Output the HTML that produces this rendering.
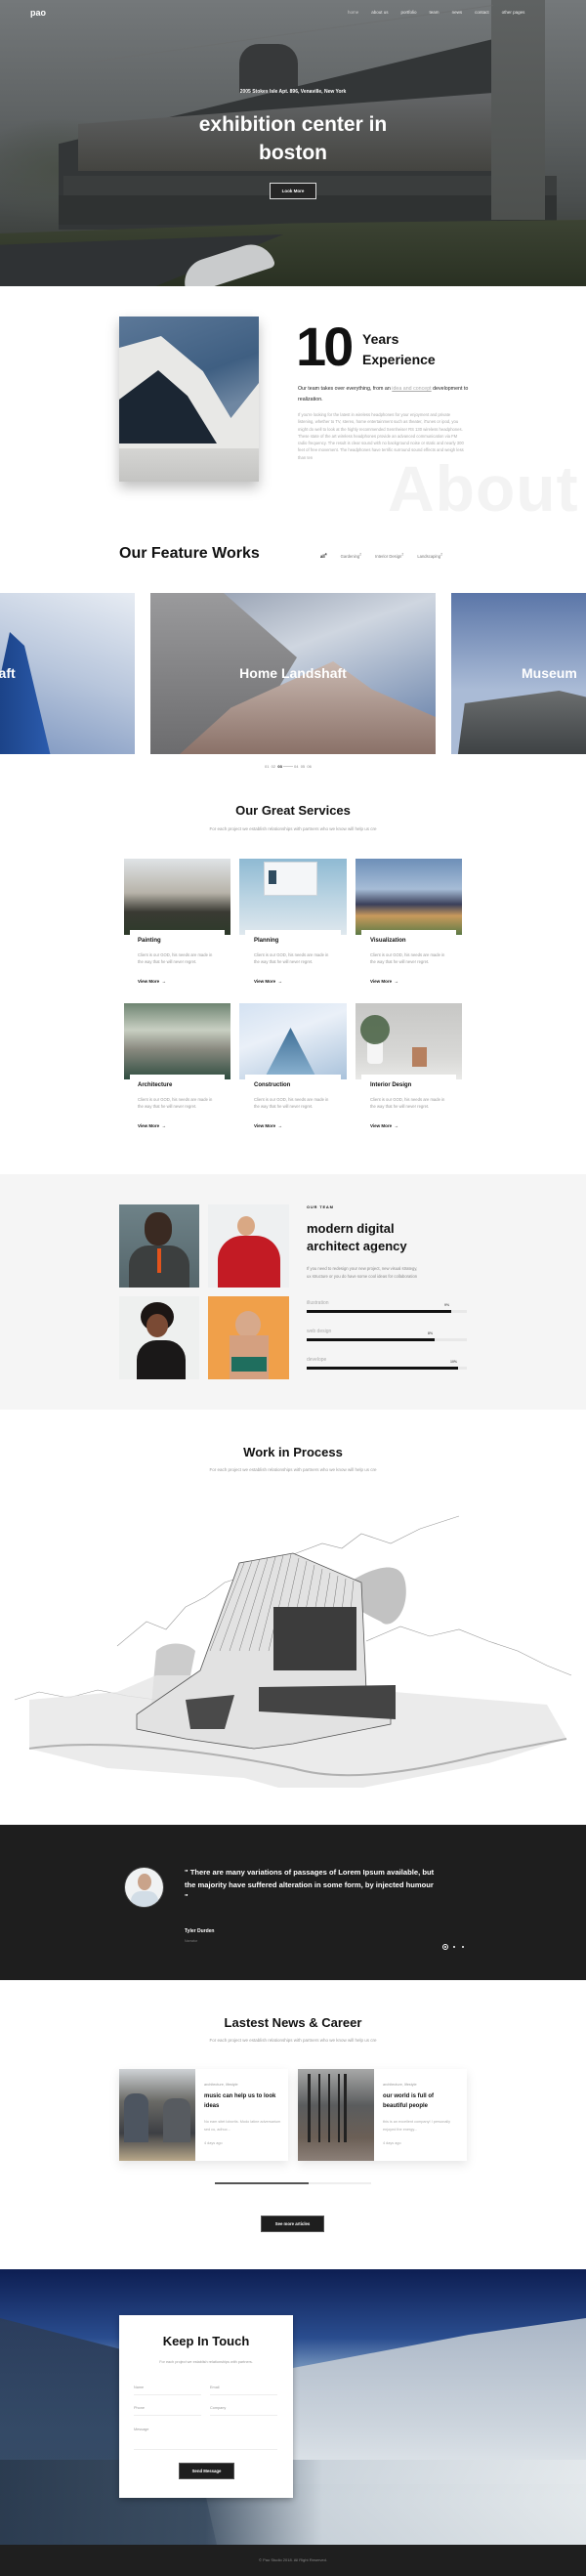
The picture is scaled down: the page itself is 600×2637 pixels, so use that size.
<!DOCTYPE html>
<html><head><meta charset="utf-8"><style>
*{margin:0;padding:0;box-sizing:border-box}
body{width:600px;height:2637px;position:relative;background:#fff;font-family:"Liberation Sans",Arial,sans-serif;color:#111;overflow:hidden}
.a{position:absolute}
.c{text-align:center}
.b{font-weight:bold}
.sm{font-size:4.5px;color:#999;line-height:8px}
.ttl{font-size:16px;font-weight:bold;color:#111;left:0;width:600px;text-align:center}
.sub{font-size:4.5px;color:#999;left:0;width:600px;text-align:center}
.card h4{font-size:6px;font-weight:bold;position:absolute}
</style></head><body>

<!-- HERO -->
<div class="a" style="left:0;top:0;width:600px;height:293px;background:linear-gradient(180deg,#74787a 0%,#5f6364 40%,#4a4e4e 70%,#2d3129 100%);overflow:hidden">
  <div class="a" style="left:0;top:120px;width:150px;height:110px;background:radial-gradient(ellipse at 40% 50%,#4a5048,transparent 70%)"></div>
  <div class="a" style="left:245px;top:45px;width:60px;height:50px;background:#37393a;border-radius:20px 20px 0 0"></div>
  <div class="a" style="left:60px;top:40px;width:445px;height:195px;background:#333637;clip-path:polygon(0 55%,100% 0,100% 100%,0 100%)"></div>
  <div class="a" style="left:80px;top:95px;width:425px;height:80px;background:linear-gradient(180deg,#646668,#444440);clip-path:polygon(0 40%,100% 0,100% 100%,0 100%)"></div>
  <div class="a" style="left:65px;top:180px;width:505px;height:22px;background:#3a3d3d"></div>
  <div class="a" style="left:60px;top:200px;width:510px;height:30px;background:#2f3232"></div>
  <div class="a" style="left:503px;top:0;width:55px;height:225px;background:linear-gradient(180deg,#5f6262,#4d504e)"></div>
  <div class="a" style="left:90px;top:5px;width:415px;height:60px;border-top:1px solid #6a6c6d;transform:skewY(-8deg);transform-origin:right top;opacity:.6"></div>
  <div class="a" style="left:0;top:225px;width:600px;height:70px;background:linear-gradient(180deg,#3c4333,#293022);clip-path:polygon(0 20%,50% 5%,100% 0,100% 100%,0 100%)"></div>
  <div class="a" style="left:0;top:240px;width:290px;height:53px;background:#2f3234;clip-path:polygon(0 20%,100% 0,55% 100%,0 100%)"></div>
  <div class="a" style="left:185px;top:258px;width:95px;height:30px;background:#c9cbcc;border-radius:40px 40px 8px 8px;transform:rotate(-18deg)"></div>
  <div class="a b" style="left:31px;top:8px;font-size:9px;color:#fff">pao</div>
  <div class="a" style="left:356px;top:10px;font-size:4.5px;color:#eee">
    <span style="margin-right:13px;color:#ccc">home</span><span style="margin-right:13px">about us</span><span style="margin-right:13px">portfolio</span><span style="margin-right:13px">team</span><span style="margin-right:13px">news</span><span style="margin-right:13px">contact</span><span>other pages</span>
  </div>
  <div class="a c b" style="left:0;width:600px;top:91px;font-size:5px;color:#fff">2005 Stokes Isle Apt. 896, Venaville, New York</div>
  <div class="a c b" style="left:0;width:600px;top:113px;font-size:21px;line-height:29px;color:#fff">exhibition center in<br>boston</div>
  <div class="a c b" style="left:276px;top:187px;width:48px;height:17px;border:1px solid #ddd;background:#262626;color:#fff;font-size:4.5px;line-height:15px">Look More</div>
</div>

<!-- ABOUT -->
<div class="a" style="left:122px;top:324px;width:143px;height:169px;box-shadow:0 6px 12px rgba(0,0,0,.25);background:linear-gradient(160deg,#5c7898 0%,#3f5f82 40%,#6f87a2 60%)">
  <div class="a" style="left:0;top:20px;width:143px;height:120px;background:#e8e8e6;clip-path:polygon(0 10%,30% 0,60% 30%,80% 70%,100% 40%,100% 100%,0 100%)"></div>
  <div class="a" style="left:0;top:55px;width:100px;height:75px;background:#1b2633;clip-path:polygon(0 40%,40% 0,70% 35%,100% 100%,0 100%)"></div>
  <div class="a" style="left:0;top:135px;width:143px;height:34px;background:linear-gradient(180deg,#d5d5d3,#c4c4c2)"></div>
</div>
<div class="a b" style="left:303px;top:322px;font-size:56px;letter-spacing:-3px;color:#111">10</div>
<div class="a b" style="left:371px;top:337px;font-size:14px;line-height:21px">Years<br>Experience</div>
<div class="a" style="left:305px;top:393px;font-size:5.3px;line-height:11px;color:#222;width:180px">Our team takes over everything, from an <span style="color:#aaa;text-decoration:underline">idea and concept</span> development to realization.</div>
<div class="a" style="left:305px;top:421px;font-size:4.2px;line-height:7.3px;color:#aaa;width:172px">If you're looking for the latest in wireless headphones for your enjoyment and private listening, whether to TV, stereo, home entertainment such as theater, iTunes or ipod, you might do well to look at the highly recommended Sennheiser RS 130 wireless headphones. These state of the art wireless headphones provide an advanced communication via FM radio frequency. The result is clear sound with no background noise or static and nearly 300 feet of free movement. The headphones have terrific surround sound effects and weigh less than ten</div>
<div class="a b" style="left:397px;top:462px;font-size:66px;color:#f3f3f3;letter-spacing:1px">About</div>

<!-- FEATURE WORKS -->
<div class="a b" style="left:122px;top:558px;font-size:16px">Our Feature Works</div>
<div class="a" style="left:328px;top:566px;font-size:4.2px;color:#777">
  <span style="color:#111;font-weight:bold;margin-right:14px">all<sup>4</sup></span><span style="margin-right:14px">Gardening<sup>2</sup></span><span style="margin-right:14px">Interior Design<sup>2</sup></span><span>Landscaping<sup>2</sup></span>
</div>
<div class="a" style="left:0;top:607px;width:138px;height:165px;background:linear-gradient(200deg,#e7ecf3 0%,#b8c6dc 50%,#7c95bf 100%);overflow:hidden">
  <div class="a" style="left:-20px;top:40px;width:75px;height:140px;background:linear-gradient(90deg,#163a7a,#2c5db0);clip-path:polygon(0 100%,40% 0,60% 10%,100% 100%)"></div>
  <div class="a b" style="left:-10px;top:74px;font-size:14px;color:#fff">haft</div>
</div>
<div class="a" style="left:154px;top:607px;width:292px;height:165px;background:linear-gradient(160deg,#8a95a8 0%,#cfd6e0 40%,#5c78a4 100%);overflow:hidden">
  <div class="a" style="left:0;top:0;width:150px;height:165px;background:linear-gradient(180deg,#9a9a9c,#6c6c6e);clip-path:polygon(0 0,50% 0,100% 40%,60% 100%,0 100%)"></div>
  <div class="a" style="left:30px;top:70px;width:262px;height:95px;background:linear-gradient(180deg,#c9b8b0,#8a7168);clip-path:polygon(20% 50%,60% 0,75% 30%,100% 60%,100% 100%,0 100%)"></div>
  <div class="a b c" style="left:0;width:292px;top:74px;font-size:14px;color:#fff">Home Landshaft</div>
</div>
<div class="a" style="left:462px;top:607px;width:138px;height:165px;background:linear-gradient(180deg,#5b76a8 0%,#aabbd6 60%);overflow:hidden">
  <div class="a" style="left:0;top:100px;width:138px;height:65px;background:linear-gradient(180deg,#6b6e6f,#3e4244);clip-path:polygon(10% 20%,80% 0,100% 10%,100% 100%,5% 100%)"></div>
  <div class="a b" style="left:72px;top:74px;font-size:14px;color:#fff">Museum</div>
</div>
<div class="a" style="left:271px;top:782px;font-size:4px;color:#888">01 &nbsp;02 &nbsp;<b style="color:#111">03</b> <span style="display:inline-block;width:10px;border-top:1px solid #ccc;vertical-align:middle"></span> 04 &nbsp;05 &nbsp;06</div>

<!-- SERVICES -->
<div class="a ttl" style="top:822px;font-size:13px">Our Great Services</div>
<div class="a sub" style="top:846px">For each project we establish relationships with partners who we know will help us cre</div>

<div class="a" style="left:127px;top:879px;width:109px;height:78px;background:linear-gradient(180deg,#dfe3e6 0%,#b7b3a9 45%,#3a3a33 70%,#2d3a2a 100%)"></div>
<div class="a" style="left:245px;top:879px;width:110px;height:78px;background:linear-gradient(180deg,#8fbad3 0%,#b9d3e2 50%,#dfe8ee 100%)"><div class="a" style="left:25px;top:3px;width:55px;height:35px;background:#f4f6f8;border:1px solid #cfd6dc"></div><div class="a" style="left:30px;top:12px;width:8px;height:14px;background:#2f4b5f"></div></div>
<div class="a" style="left:364px;top:879px;width:109px;height:78px;background:linear-gradient(180deg,#6d8fb8 0%,#a6bcd6 40%,#3a3f5a 60%,#c99a5c 75%,#5c7a45 100%)"></div>
<div class="a" style="left:127px;top:1027px;width:109px;height:78px;background:linear-gradient(180deg,#6f8572 0%,#c8cfc2 35%,#8a8a80 60%,#2f4d40 100%)"></div>
<div class="a" style="left:245px;top:1027px;width:110px;height:78px;background:linear-gradient(160deg,#d4e2f2 0%,#eaf0f8 40%,#a9c2db 100%)"><div class="a" style="left:25px;top:25px;width:55px;height:53px;background:linear-gradient(180deg,#3f6f96,#8fb6d4);clip-path:polygon(50% 0,100% 100%,0 100%)"></div></div>
<div class="a" style="left:364px;top:1027px;width:109px;height:78px;background:linear-gradient(180deg,#c7c7c5,#d8d8d6 70%,#e9e9e7)"><div class="a" style="left:12px;top:40px;width:16px;height:22px;background:#f5f5f5;border-radius:0 0 4px 4px"></div><div class="a" style="left:5px;top:12px;width:30px;height:30px;background:#3f5a3a;border-radius:50%;opacity:.8"></div><div class="a" style="left:58px;top:45px;width:15px;height:20px;background:#b6805f"></div></div>

<div class="card">
<div class="a" style="left:133px;top:952px;width:97px;height:8px;background:#fff"></div>
<div class="a" style="left:251px;top:952px;width:98px;height:8px;background:#fff"></div>
<div class="a" style="left:370px;top:952px;width:97px;height:8px;background:#fff"></div>
<div class="a" style="left:133px;top:1100px;width:97px;height:8px;background:#fff"></div>
<div class="a" style="left:251px;top:1100px;width:98px;height:8px;background:#fff"></div>
<div class="a" style="left:370px;top:1100px;width:97px;height:8px;background:#fff"></div>
<h4 style="left:141px;top:960px">Painting</h4>
<h4 style="left:260px;top:960px">Planning</h4>
<h4 style="left:379px;top:960px">Visualization</h4>
<h4 style="left:141px;top:1108px">Architecture</h4>
<h4 style="left:260px;top:1108px">Construction</h4>
<h4 style="left:379px;top:1108px">Interior Design</h4>
<div class="a sm" style="left:141px;top:974px;width:82px;font-size:4.2px;line-height:7.3px">Client is our GOD, his needs are made in the way that he will never regret.</div>
<div class="a sm" style="left:260px;top:974px;width:82px;font-size:4.2px;line-height:7.3px">Client is our GOD, his needs are made in the way that he will never regret.</div>
<div class="a sm" style="left:379px;top:974px;width:82px;font-size:4.2px;line-height:7.3px">Client is our GOD, his needs are made in the way that he will never regret.</div>
<div class="a sm" style="left:141px;top:1122px;width:82px;font-size:4.2px;line-height:7.3px">Client is our GOD, his needs are made in the way that he will never regret.</div>
<div class="a sm" style="left:260px;top:1122px;width:82px;font-size:4.2px;line-height:7.3px">Client is our GOD, his needs are made in the way that he will never regret.</div>
<div class="a sm" style="left:379px;top:1122px;width:82px;font-size:4.2px;line-height:7.3px">Client is our GOD, his needs are made in the way that he will never regret.</div>
<div class="a b" style="left:141px;top:1002px;font-size:4.5px">View More &nbsp;&rarr;</div>
<div class="a b" style="left:260px;top:1002px;font-size:4.5px">View More &nbsp;&rarr;</div>
<div class="a b" style="left:379px;top:1002px;font-size:4.5px">View More &nbsp;&rarr;</div>
<div class="a b" style="left:141px;top:1150px;font-size:4.5px">View More &nbsp;&rarr;</div>
<div class="a b" style="left:260px;top:1150px;font-size:4.5px">View More &nbsp;&rarr;</div>
<div class="a b" style="left:379px;top:1150px;font-size:4.5px">View More &nbsp;&rarr;</div>
</div>

<!-- TEAM -->
<div class="a" style="left:0;top:1202px;width:600px;height:241px;background:#f5f5f5"></div>
<div class="a" style="left:122px;top:1233px;width:82px;height:85px;background:linear-gradient(180deg,#6e8288,#55666b)"><div class="a" style="left:26px;top:8px;width:28px;height:34px;background:#3a2a22;border-radius:45%"></div><div class="a" style="left:10px;top:42px;width:62px;height:43px;background:#3c3f3f;border-radius:20px 20px 0 0"></div><div class="a" style="left:39px;top:45px;width:4px;height:25px;background:#e2531c"></div></div>
<div class="a" style="left:213px;top:1233px;width:83px;height:85px;background:#eef0f1"><div class="a" style="left:30px;top:12px;width:18px;height:20px;background:#d9a884;border-radius:50%"></div><div class="a" style="left:10px;top:32px;width:64px;height:53px;background:#c31b24;border-radius:25px 25px 0 0"></div></div>
<div class="a" style="left:122px;top:1327px;width:82px;height:85px;background:#eef0ef"><div class="a" style="left:22px;top:6px;width:34px;height:30px;background:#1c1614;border-radius:50%"></div><div class="a" style="left:28px;top:18px;width:22px;height:24px;background:#7a4a34;border-radius:50%"></div><div class="a" style="left:18px;top:45px;width:50px;height:40px;background:#1a1818;border-radius:20px 20px 0 0"></div></div>
<div class="a" style="left:213px;top:1327px;width:83px;height:85px;background:#f0a04a"><div class="a" style="left:28px;top:15px;width:26px;height:28px;background:#d7a98b;border-radius:50%"></div><div class="a" style="left:22px;top:40px;width:40px;height:45px;background:#d4a080"></div><div class="a" style="left:24px;top:62px;width:36px;height:15px;background:#1f6e5e"></div></div>
<div class="a b" style="left:314px;top:1233px;font-size:4px;letter-spacing:.8px">OUR TEAM</div>
<div class="a b" style="left:314px;top:1249px;font-size:13px;line-height:18px">modern digital<br>architect agency</div>
<div class="a" style="left:314px;top:1295px;font-size:4.2px;line-height:8px;color:#888">If you need to redesign your new project, new visual strategy,<br>ux structure or you do have some cool ideas for collaboration</div>
<div class="a" style="left:314px;top:1331px;font-size:5px;color:#aaa">illustration</div><div class="a b" style="left:455px;top:1334px;font-size:3.5px;color:#666">9%</div>
<div class="a" style="left:314px;top:1341px;width:164px;height:3px;background:#e8e8e8"><div style="width:148px;height:3px;background:#111"></div></div>
<div class="a" style="left:314px;top:1360px;font-size:5px;color:#aaa">web design</div><div class="a b" style="left:438px;top:1363px;font-size:3.5px;color:#666">8%</div>
<div class="a" style="left:314px;top:1370px;width:164px;height:3px;background:#e8e8e8"><div style="width:131px;height:3px;background:#111"></div></div>
<div class="a" style="left:314px;top:1389px;font-size:5px;color:#aaa">develope</div><div class="a b" style="left:461px;top:1392px;font-size:3.5px;color:#666">10%</div>
<div class="a" style="left:314px;top:1399px;width:164px;height:3px;background:#e8e8e8"><div style="width:155px;height:3px;background:#111"></div></div>

<!-- WORK IN PROCESS -->
<div class="a ttl" style="top:1479px;font-size:13px">Work in Process</div>
<div class="a sub" style="top:1502px">For each project we establish relationships with partners who we know will help us cre</div>
<svg class="a" style="left:0;top:1540px" width="600" height="290" viewBox="0 0 600 290">
  <g fill="none" stroke="#999" stroke-width=".6">
    <path d="M120 145 L150 120 L170 128 L190 105 L210 95 L230 80 L260 70 L290 55 L330 40 L350 45 L370 30 L400 40 L430 25 L470 12"/>
    <path d="M15 200 L40 192 L70 198 L100 190 L130 196 L160 200"/>
    <path d="M375 140 L410 125 L440 135 L470 128 L500 140 L530 150 L560 165 L585 175"/>
  </g>
  <path d="M350 85 C370 70 410 50 415 80 C420 110 400 130 390 120 C370 110 350 100 350 85Z" fill="#999" opacity=".6"/>
  <path d="M160 150 C170 140 190 140 200 150 L190 200 L155 205Z" fill="#999" opacity=".5"/>
  <path d="M30 200 L120 192 L160 175 L200 175 L380 190 L560 205 L580 240 L500 265 L320 300 L250 280 L110 270 L30 250Z" fill="#e6e6e6" opacity=".8"/>
  <path d="M140 215 L205 170 L245 60 L300 50 L370 80 L375 190 L400 195 L400 225 L300 245 L260 250 L190 240 L140 230Z" fill="#e2e2e2" stroke="#555" stroke-width=".8"/>
  <g stroke="#777" stroke-width=".5">
    <path d="M215 150 L250 60 M225 150 L258 58 M235 150 L266 56 M245 150 L274 55 M255 150 L282 54 M265 150 L290 52 M275 150 L298 51 M285 150 L306 55 M295 150 L314 58 M305 150 L322 62 M315 150 L330 66 M325 150 L338 70 M335 150 L346 73 M345 150 L354 76 M355 150 L362 78"/>
  </g>
  <rect x="280" y="105" width="85" height="65" fill="#3c3c3c"/>
  <path d="M265 187 L405 185 L405 220 L265 212Z" fill="#444"/>
  <path d="M190 200 L240 195 L230 230 L195 230Z" fill="#4a4a4a"/>
  <path d="M30 250 C100 240 200 250 300 270 C350 285 420 275 500 255 L580 240" fill="none" stroke="#777" stroke-width="2" opacity=".5"/>
</svg>

<!-- TESTIMONIAL -->
<div class="a" style="left:0;top:1868px;width:600px;height:159px;background:#1e1e1e"></div>
<div class="a" style="left:127px;top:1911px;width:41px;height:42px;border-radius:50%;background:#f0f2f3;border:1.5px solid #444;overflow:hidden"><div class="a" style="left:13px;top:6px;width:14px;height:17px;background:#c9a38a;border-radius:50%"></div><div class="a" style="left:6px;top:24px;width:28px;height:20px;background:#d2dde6;border-radius:10px 10px 0 0"></div></div>
<div class="a b" style="left:189px;top:1911px;font-size:7.6px;line-height:12.6px;color:#fff;width:260px">" There are many variations of passages of Lorem Ipsum available, but the majority have suffered alteration in some form, by injected humour "</div>
<div class="a b" style="left:189px;top:1974px;font-size:5px;color:#fff">Tyler Durden</div>
<div class="a" style="left:189px;top:1985px;font-size:3.6px;color:#777">Narrator</div>
<div class="a" style="left:453px;top:1990px;width:6px;height:6px;border:1px solid #fff;border-radius:50%"><div style="width:2px;height:2px;background:#fff;border-radius:50%;margin:1px"></div></div>
<div class="a" style="left:464px;top:1992px;width:2px;height:2px;background:#fff;border-radius:50%"></div>
<div class="a" style="left:473px;top:1992px;width:2px;height:2px;background:#fff;border-radius:50%"></div>

<!-- NEWS -->
<div class="a ttl" style="top:2063px;font-size:13px">Lastest News &amp; Career</div>
<div class="a sub" style="top:2086px">For each project we establish relationships with partners who we know will help us cre</div>
<div class="a" style="left:122px;top:2118px;width:173px;height:94px;background:#fff;box-shadow:0 4px 10px rgba(0,0,0,.1)">
  <div class="a" style="left:0;top:0;width:78px;height:94px;background:linear-gradient(180deg,#cfd3d6 0%,#6a6a66 35%,#3d3f44 70%,#b8a88a 100%)"><div class="a" style="left:5px;top:25px;width:25px;height:50px;background:#4d5560;border-radius:10px 10px 0 0"></div><div class="a" style="left:45px;top:30px;width:28px;height:45px;background:#575b60;border-radius:10px 10px 0 0"></div></div>
  <div class="a" style="left:87px;top:14px;font-size:3.8px;color:#999">architecture, lifestyle</div>
  <div class="a b" style="left:87px;top:24px;font-size:6px;line-height:9.5px;width:75px">music can help us to look ideas</div>
  <div class="a" style="left:87px;top:51px;font-size:3.8px;line-height:7.5px;color:#aaa;width:80px">No eam sitet lobortis. Modo latine adversarium sed cu, adhuc...</div>
  <div class="a" style="left:87px;top:74px;font-size:3.8px;color:#aaa">4 days ago</div>
</div>
<div class="a" style="left:305px;top:2118px;width:173px;height:94px;background:#fff;box-shadow:0 4px 10px rgba(0,0,0,.1)">
  <div class="a" style="left:0;top:0;width:78px;height:94px;background:linear-gradient(180deg,#a7a8a8 0%,#5a5c5d 40%,#6b5f56 75%,#8c8078 100%)"><div class="a" style="left:10px;top:5px;width:40px;height:70px;border-left:3px solid #222;border-right:3px solid #222;background:repeating-linear-gradient(90deg,transparent 0 8px,#222 8px 10px)"></div></div>
  <div class="a" style="left:87px;top:14px;font-size:3.8px;color:#999">architecture, lifestyle</div>
  <div class="a b" style="left:87px;top:24px;font-size:6px;line-height:9.5px;width:75px">our world is full of beautiful people</div>
  <div class="a" style="left:87px;top:51px;font-size:3.8px;line-height:7.5px;color:#aaa;width:80px">this is an excellent company! I personally enjoyed the energy...</div>
  <div class="a" style="left:87px;top:74px;font-size:3.8px;color:#aaa">4 days ago</div>
</div>
<div class="a" style="left:220px;top:2234px;width:160px;height:2px;background:#eee"><div style="width:96px;height:2px;background:#555"></div></div>
<div class="a c b" style="left:267px;top:2268px;width:65px;height:17px;background:#1e1e1e;border:1px solid #555;color:#fff;font-size:4.3px;line-height:15px">See more articles</div>

<!-- CONTACT -->
<div class="a" style="left:0;top:2323px;width:600px;height:282px;background:linear-gradient(180deg,#0d1e52 0%,#2a4d8f 25%,#6f8fb9 35%,#c6ced6 65%,#dce2e6 85%,#b9c1c6 100%);overflow:hidden">
  <div class="a" style="left:0;top:50px;width:600px;height:232px;background:linear-gradient(180deg,#2b3d5d,#344a66 50%,#3a4d64);clip-path:polygon(0 0,30% 20%,37% 100%,0 100%)"></div>
  <div class="a" style="left:300px;top:50px;width:300px;height:170px;background:linear-gradient(180deg,#aab6c6,#cfd7df 70%,#e5eaee);clip-path:polygon(0 30%,60% 10%,100% 0,100% 100%,0 100%)"></div>
  <div class="a" style="left:0;top:195px;width:600px;height:87px;background:linear-gradient(90deg,#2a3a4e 0%,#3c4e62 35%,#c9d2da 55%,#e4e9ec 100%);opacity:.9"></div>
</div>
<div class="a" style="left:122px;top:2370px;width:178px;height:187px;background:#fff;box-shadow:0 2px 6px rgba(0,0,0,.3)">
  <div class="a b c" style="left:0;width:178px;top:19px;font-size:13px">Keep In Touch</div>
  <div class="a c" style="left:0;width:178px;top:46px;font-size:3.8px;color:#999">For each project we establish relationships with partners.</div>
  <div class="a" style="left:15px;top:72px;font-size:3.8px;color:#999">Name</div>
  <div class="a" style="left:93px;top:72px;font-size:3.8px;color:#999">Email</div>
  <div class="a" style="left:15px;top:81px;width:69px;border-top:1px solid #eee"></div>
  <div class="a" style="left:93px;top:81px;width:69px;border-top:1px solid #eee"></div>
  <div class="a" style="left:15px;top:93px;font-size:3.8px;color:#999">Phone</div>
  <div class="a" style="left:93px;top:93px;font-size:3.8px;color:#999">Company</div>
  <div class="a" style="left:15px;top:102px;width:69px;border-top:1px solid #eee"></div>
  <div class="a" style="left:93px;top:102px;width:69px;border-top:1px solid #eee"></div>
  <div class="a" style="left:15px;top:115px;font-size:3.8px;color:#999">Message</div>
  <div class="a" style="left:15px;top:137px;width:147px;border-top:1px solid #eee"></div>
  <div class="a c b" style="left:61px;top:151px;width:57px;height:17px;background:#1e1e1e;border:1px solid #555;color:#fff;font-size:4.3px;line-height:15px">Send Message</div>
</div>

<!-- FOOTER -->
<div class="a" style="left:0;top:2605px;width:600px;height:32px;background:#1f1f1f"></div>
<div class="a c" style="left:0;width:600px;top:2618px;font-size:4px;color:#888">© Pao Studio 2018. All Right Reserved.</div>
</body></html>
